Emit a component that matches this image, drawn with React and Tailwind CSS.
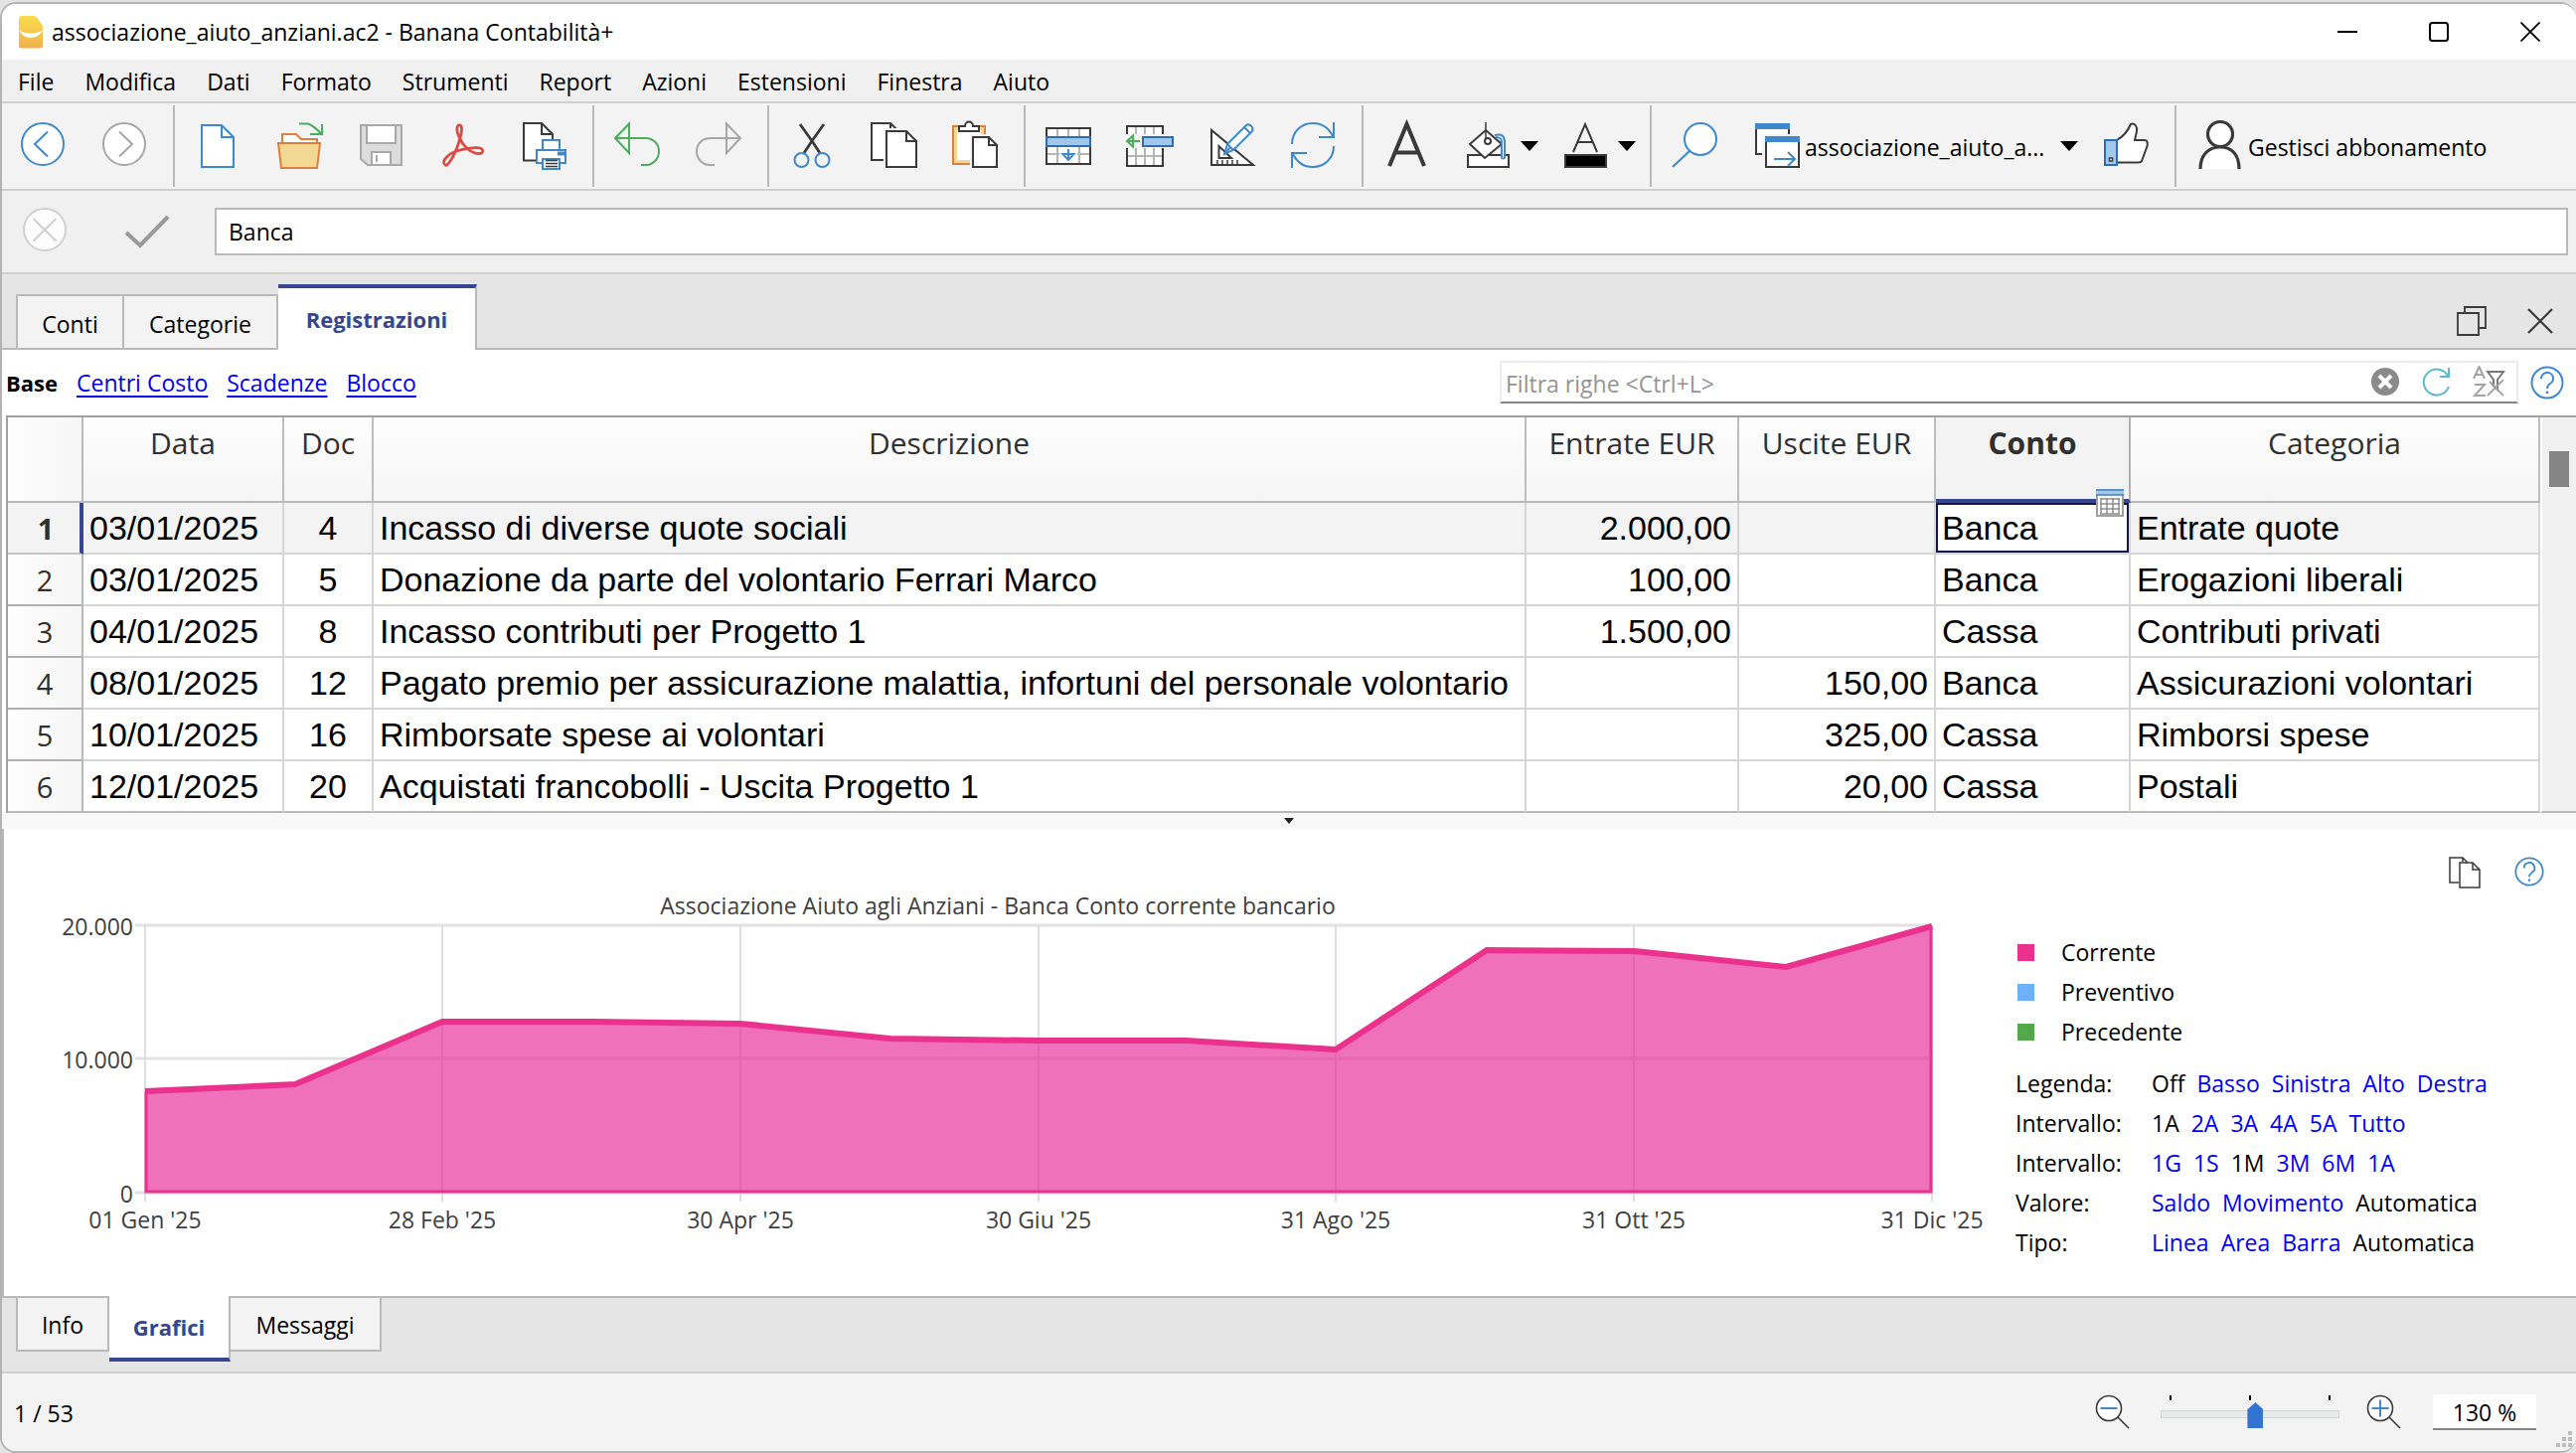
import React from "react";

const BLUE = "#3f88cb";
const DARK = "#3a3a3a";
const GREEN = "#4aac5c";
const GREY = "#a6a6a6";

function Icon({ stroke = DARK, children }) {
  return (
    <svg viewBox="0 0 48 48" className="h-12 w-12 shrink-0 overflow-visible" fill="none" stroke={stroke} strokeWidth="2" aria-hidden="true">
      {children}
    </svg>
  );
}

function ToolButton({ label, children }) {
  return (
    <button type="button" aria-label={label} className="flex w-[82px] shrink-0 items-center justify-center">
      {children}
    </button>
  );
}

function DropToolButton({ label, children }) {
  return (
    <button type="button" aria-label={label} className="flex w-[98px] shrink-0 items-center gap-[9px] pl-[17px]">
      {children}
      <Caret />
    </button>
  );
}

function Caret() {
  return (
    <svg viewBox="0 0 18 10" className="h-2.5 w-[18px] shrink-0" aria-hidden="true">
      <path d="M0 0H18L9 10Z" fill="#000" />
    </svg>
  );
}

function Separator() {
  return <div className="mr-0.5 ml-2 w-0.5 shrink-0 self-stretch bg-[#b9b9b9]" />;
}

function CopyIcon() {
  return (
    <Icon>
      <path d="M15.500 38H2V1H21L28 8V14" fill="#fff" />
      <path d="M21 1V8" />
      <path d="M17 9H37L47 19V45H17Z" fill="#fff" stroke="#f3f3f3" strokeWidth="6" />
      <path d="M17 9H37L47 19V45H17Z" fill="#fff" />
      <path d="M37 9V19H47" />
    </Icon>
  );
}

function HelpIcon({ className }) {
  return (
    <svg viewBox="0 0 34 34" className={className} fill="none" stroke={BLUE} strokeWidth="2" aria-hidden="true">
      <circle cx="17" cy="17" r="15.500" />
      <path d="M11 13a6 6 0 1 1 9 5c-2 1.300-3 2.500-3 5" />
      <path d="M17 25.500V28" strokeWidth="2.500" />
    </svg>
  );
}

function TitleBar() {
  return (
    <header className="flex h-14 items-center bg-white pl-4">
      <svg viewBox="0 0 26 34" className="h-[34px] w-[26px] shrink-0" aria-hidden="true">
        <defs>
          <linearGradient id="logo" x1="0" y1="0" x2="0" y2="1">
            <stop offset="0" stopColor="#f9dc4c" />
            <stop offset="1" stopColor="#f1b04e" />
          </linearGradient>
        </defs>
        <path d="M4 1H16Q18 1 19.500 3L25 11V31Q25 33.500 22 33.500H4Q1 33.500 1 31V4Q1 1 4 1Z" fill="url(#logo)" />
        <path d="M1 15Q6 18.500 13 18.500T25 15Q21 23 13 23T1 15Z" fill="#fff" />
      </svg>
      <h1 className="ml-2 flex-1">associazione_aiuto_anziani.ac2 - Banana Contabilità+</h1>
      <button type="button" aria-label="Riduci a icona" className="flex h-14 w-[92px] items-center justify-center">
        <svg viewBox="0 0 20 20" className="h-5 w-5"><path d="M0 10H20" stroke="#000" strokeWidth="2" /></svg>
      </button>
      <button type="button" aria-label="Ingrandisci" className="flex h-14 w-[92px] items-center justify-center">
        <svg viewBox="0 0 20 20" className="h-5 w-5"><rect x="1" y="1" width="18" height="18" rx="2.500" fill="none" stroke="#000" strokeWidth="2" /></svg>
      </button>
      <button type="button" aria-label="Chiudi" className="flex h-14 w-[92px] items-center justify-center">
        <svg viewBox="0 0 20 20" className="h-5 w-5"><path d="M0.500 0.500L19.500 19.500M19.500 0.500L0.500 19.500" stroke="#000" strokeWidth="1.800" /></svg>
      </button>
    </header>
  );
}

const MENUS = ["File", "Modifica", "Dati", "Formato", "Strumenti", "Report", "Azioni", "Estensioni", "Finestra", "Aiuto"];

function MenuBar() {
  return (
    <nav className="flex h-11 items-center border-b-2 border-[#cfcfcf] bg-[#f0f0f0] pt-0.5 pl-4">
      <div className="flex gap-[31px]">
        {MENUS.map((m) => (
          <button key={m} type="button">{m}</button>
        ))}
      </div>
    </nav>
  );
}

function Toolbar() {
  return (
    <div className="flex h-[88px] border-b-2 border-[#cfcfcf] bg-[#f3f3f3] py-0.5">
      <ToolButton label="Indietro">
        <Icon stroke={BLUE}><circle cx="24" cy="22" r="21" fill="#fff" /><path d="M29 9.500L16 22L29 34.500" /></Icon>
      </ToolButton>
      <ToolButton label="Avanti">
        <Icon stroke={GREY}><circle cx="24" cy="22" r="21" fill="#fff" /><path d="M19 9.500L32 22L19 34.500" /></Icon>
      </ToolButton>
      <Separator />
      <ToolButton label="Nuovo">
        <Icon stroke={BLUE}><path d="M8 3H28L40 15V45H8Z" fill="#fff" /><path d="M28 3V15H40" /></Icon>
      </ToolButton>
      <ToolButton label="Apri">
        <Icon stroke="#df7f3c">
          <path d="M7 21V12H21L26 17H42V21" fill="#fff" />
          <path d="M3 21H45L42 46H6Z" fill="#f2d993" />
          <path d="M24 1.500H33C38 3.500 43 8 46.500 12M47 2V12H35" stroke={GREEN} />
        </Icon>
      </ToolButton>
      <ToolButton label="Salva">
        <Icon stroke="#a8a8a8">
          <path d="M4 3H45V43H11L4 37Z" fill="#dcdcdc" />
          <path d="M10 3H39V21H10Z" fill="#fff" />
          <path d="M15 43V30H34V43Z" fill="#fff" />
          <path d="M20 33V40" />
        </Icon>
      </ToolButton>
      <ToolButton label="Esporta PDF">
        <Icon stroke="#dc4a44">
          <path strokeWidth="2.800" d="M7 43C2 39 11 31 20 28.500C30 26 43 24 44.500 28C46 33 37 33 29 26.500C22 20 17 8 19.500 4C21 1.500 24 3 23.500 8C22.500 17 17 33 11 40.500C9 43 8 44 7 43Z" />
        </Icon>
      </ToolButton>
      <ToolButton label="Stampa">
        <Icon>
          <path d="M17 38.500H4V1H22L33 12V20" fill="#fff" />
          <path d="M22 1V12H33" />
          <path d="M23 28V18H40V28" stroke={BLUE} fill="#fff" />
          <path d="M17 28H46V41H17Z" stroke={BLUE} fill="#fff" />
          <path d="M38 31.500H45" stroke={BLUE} strokeWidth="4" />
          <path d="M23 37H40V47H23Z" stroke={BLUE} fill="#fff" />
          <path d="M26 38.500H38M26 41.500H38M26 44.500H38" strokeWidth="1.500" />
        </Icon>
      </ToolButton>
      <Separator />
      <ToolButton label="Annulla">
        <Icon stroke={GREEN}><path d="M16 1.500L2 16L16 31Z" /><path d="M2 16H32C41 16 46 22 46 29.500S40 43 33 43H28" /></Icon>
      </ToolButton>
      <ToolButton label="Ripeti">
        <Icon stroke={GREY}><path d="M32 1.500L46 16L32 31Z" /><path d="M46 16H16C7 16 2 22 2 29.500S8 43 15 43H20" /></Icon>
      </ToolButton>
      <Separator />
      <ToolButton label="Taglia">
        <Icon>
          <path d="M12 2L24.500 19.500L32 31M36 2L23.500 19.500L16 31" strokeWidth="2.800" />
          <circle cx="13.500" cy="38" r="7" stroke={BLUE} /><circle cx="34.500" cy="38" r="7" stroke={BLUE} />
        </Icon>
      </ToolButton>
      <ToolButton label="Copia"><CopyIcon /></ToolButton>
      <ToolButton label="Incolla">
        <Icon>
          <path d="M2 4H34V42H2Z" fill="#f2d993" stroke="#df7f3c" />
          <path d="M6 8H30V38H6Z" fill="#fff" stroke="none" />
          <path d="M8 9V4H14C14 -2 22 -2 22 4H28V9Z" fill="#fff" />
          <path d="M22 15H38L46 23V45H22Z" fill="#fff" stroke="#f3f3f3" strokeWidth="6" />
          <path d="M22 15H38L46 23V45H22Z" fill="#fff" /><path d="M38 15V23H46" />
        </Icon>
      </ToolButton>
      <Separator />
      <ToolButton label="Aggiungi righe">
        <Icon>
          <path d="M2 6H46V42H2Z" fill="#fff" />
          <path d="M13 7V14M24 7V14M35 7V14M13 24V41M35 24V41M3 32H45" stroke="#b5b5b5" />
          <path d="M15 25H33V41H15Z" fill="#fff" stroke="none" />
          <path d="M2 15H46V24H2Z" fill="#a1c8ea" stroke="#2c6db5" />
          <path d="M24 27V38M18.500 32H29.500L24 38Z" stroke={BLUE} />
        </Icon>
      </ToolButton>
      <ToolButton label="Inserisci righe">
        <Icon>
          <path d="M1 4H37V44H1Z" fill="#fff" />
          <path d="M10 5V43M19 5V43M28 5V43M2 34H36" stroke="#b5b5b5" />
          <path d="M-1 12H40V26H-1Z" fill="#f3f3f3" stroke="none" />
          <path d="M17 15H47V24H17Z" fill="#a1c8ea" stroke="#2c6db5" />
          <path d="M1 19H14M7 13.500V24.500L1 19Z" stroke={GREEN} />
        </Icon>
      </ToolButton>
      <ToolButton label="Progettazione">
        <Icon>
          <path d="M4 8V43H46Z" fill="#fff" /><path d="M11.500 24V36H24Z" />
          <path d="M10 38V42M15 38V42M20 38V42M25 38V42M30 38V42" strokeWidth="1.500" />
          <path d="M17 32L20 22L39 3C42 1 47 5 45 9L26 28Z" fill="#fff" stroke={BLUE} />
          <path d="M20 22L26 28M37 5L43 11M17 32L23 25" stroke={BLUE} />
        </Icon>
      </ToolButton>
      <ToolButton label="Aggiorna">
        <Icon stroke={BLUE}>
          <path d="M3 22C3 10 12 1 24 1C33 1 40 6 44 14M45 0V15H30" />
          <path d="M45 24C45 36 36 45 24 45C15 45 8 40 4 32M3 46V31H18" />
        </Icon>
      </ToolButton>
      <Separator />
      <ToolButton label="Carattere">
        <Icon><path d="M7 44L24.500 2L42 44M13 30.500H36" strokeWidth="4" /></Icon>
      </ToolButton>
      <DropToolButton label="Colore sfondo">
        <Icon>
          <path d="M4 33H45V45H4Z" fill="#fff" />
          <path d="M22 8L38 22L21 36L6 22Z" fill="#fff" />
          <path d="M22 0V16" strokeWidth="1.500" /><circle cx="24" cy="19" r="3" />
          <path d="M31 13C38 11 41 14 41 20V35C41 37 38 37 38 35V20C38 16 36 15 32 15" stroke={BLUE} fill="#fff" />
        </Icon>
      </DropToolButton>
      <DropToolButton label="Colore testo">
        <Icon><path d="M12 30L24 2L36 30M16 20H32" strokeWidth="2" /><path d="M4 33H45V45H4Z" fill="#000" /></Icon>
      </DropToolButton>
      <Separator />
      <ToolButton label="Cerca">
        <Icon stroke={BLUE}><circle cx="30" cy="17" r="16" fill="#fff" /><path d="M19 29L2 45" /></Icon>
      </ToolButton>
      <button type="button" className="flex w-[352px] shrink-0 items-center pl-[18px]">
        <Icon>
          <path d="M10 32H3V2H36V13" fill="#fff" />
          <path d="M2 4H37" stroke={BLUE} strokeWidth="6" />
          <path d="M9 12H50V46H9Z" fill="#f3f3f3" stroke="none" />
          <path d="M13 16H46V45H13Z" fill="#fff" />
          <path d="M12 17H47" stroke={BLUE} strokeWidth="6" />
          <path d="M21 37H41M35 30L42 37L35 44" stroke={BLUE} />
        </Icon>
        <span className="ml-1 pt-0.5">associazione_aiuto_a...</span>
        <span className="mr-[7px] ml-auto"><Caret /></span>
      </button>
      <ToolButton label="Mi piace">
        <Icon>
          <path d="M15 18C22 14 26 9 29 2C33 0 36 5 35 9L33 18H43C46 18 46 21 45.500 24L40 39C39.500 40.500 38 40.500 36 40.500H15Z" fill="#fff" />
          <path d="M3 18H15V43H3Z" fill="#a1c8ea" stroke="#2c6db5" />
          <path d="M7.500 36H10.500V39H7.500Z" fill="#fff" strokeWidth="1.500" />
        </Icon>
      </ToolButton>
      <Separator />
      <button type="button" className="flex shrink-0 items-center pl-[18px]">
        <Icon><path d="M4 47C4 33 12 25 24 25S43 33 43 47" fill="#fff" strokeWidth="3.200" /><circle cx="24" cy="12" r="12.500" fill="#fff" strokeWidth="3.200" /></Icon>
        <span className="ml-1 pt-0.5">Gestisci abbonamento</span>
      </button>
    </div>
  );
}

function FormulaBar() {
  return (
    <div className="flex h-[84px] items-center border-b-2 border-[#cfcfcf] bg-[#f0f0f0] pr-2 pl-[19px]">
      <button type="button" aria-label="Annulla modifica">
        <Icon stroke="#d0d0d0"><circle cx="24" cy="22" r="21" fill="#fcfcfc" /><path d="M12.500 11L35.500 33.500M35.500 11L12.500 33.500" /></Icon>
      </button>
      <button type="button" aria-label="Conferma" className="ml-[54px]">
        <Icon stroke="#999"><path d="M4 25L18 38L46 9" strokeWidth="4" /></Icon>
      </button>
      <input aria-label="Contenuto cella" defaultValue="Banca" className="ml-[45px] h-12 min-w-0 flex-1 border-2 border-[#b9b9b9] bg-white px-3 outline-none" />
    </div>
  );
}

function TopTabs() {
  return (
    <div className="flex h-[76px] items-end bg-[#e5e5e5]">
      <div className="w-3.5 self-stretch border-b-2 border-[#b9b9b9]" />
      <button type="button" className="h-14 w-[109px] border-2 border-[#b9b9b9] bg-[#f3f3f3] pt-1">Conti</button>
      <button type="button" className="h-14 w-[155px] border-2 border-l-0 border-[#b9b9b9] bg-[#f3f3f3] pt-1">Categorie</button>
      <button type="button" className="h-[66px] w-[200px] border-t-4 border-r-2 border-t-[#37468f] border-r-[#b9b9b9] bg-white text-[22px] font-bold text-[#37468f]">Registrazioni</button>
      <div className="flex flex-1 items-center justify-end gap-10 self-stretch border-b-2 border-[#b9b9b9] pt-5 pr-[23px]">
        <button type="button" aria-label="Ripristina">
          <svg viewBox="0 0 32 32" className="h-8 w-8" fill="none" stroke={DARK} strokeWidth="1.800"><path d="M9 8V2H30V23H23" /><path d="M2 8H23V30H2Z" /></svg>
        </button>
        <button type="button" aria-label="Chiudi scheda">
          <svg viewBox="0 0 26 26" className="h-[26px] w-[26px]" stroke={DARK} strokeWidth="2.200"><path d="M1 1L25 25M25 1L1 25" /></svg>
        </button>
      </div>
    </div>
  );
}

function FilterRow() {
  return (
    <div className="flex h-[66px] items-center bg-white pr-3 pl-1">
      <strong className="text-[22px]">Base</strong>
      {["Centri Costo", "Scadenze", "Blocco"].map((t) => (
        <a key={t} href="#" className="ml-[19px] text-[#0000ee] underline decoration-2 underline-offset-4">{t}</a>
      ))}
      <div className="-mt-0.5 ml-auto flex h-[43px] w-[1025px] items-center border-2 border-[#ececec] border-b-[#868686] bg-white">
        <input aria-label="Filtra righe" placeholder="Filtra righe <Ctrl+L>" className="h-full min-w-0 flex-1 bg-transparent pt-1 pl-1 outline-none placeholder:text-[#949494]" />
        <button type="button" aria-label="Cancella filtro" className="mr-[23px]">
          <svg viewBox="0 0 28 28" className="h-7 w-7"><circle cx="14" cy="14" r="14" fill="#8a8a8a" /><path d="M8 8L20 20M20 8L8 20" stroke="#fff" strokeWidth="4" /></svg>
        </button>
        <button type="button" aria-label="Aggiorna filtro" className="mr-[23px]">
          <svg viewBox="0 0 28 28" className="h-7 w-7 overflow-visible" fill="none" stroke="#58b9cc" strokeWidth="2"><path d="M27 19A13 13 0 1 1 26 8M27 0V9H18" /></svg>
        </button>
        <button type="button" aria-label="Ordina e filtra" className="mr-2.5">
          <svg viewBox="0 0 34 32" className="h-8 w-[34px]" fill="none" stroke="#a3a3a3" strokeWidth="2">
            <path d="M1 13L6.500 1L12 13M3 9H10M2 19H12L2 30H13" />
            <path d="M15 6H31L25 14V24L21 20V14Z" stroke="#787878" /><path d="M15 30L31 14M17 16L31 30" strokeWidth="1.800" />
          </svg>
        </button>
      </div>
      <button type="button" aria-label="Guida" className="ml-3"><HelpIcon className="h-[34px] w-[34px]" /></button>
    </div>
  );
}

const HEADERS = ["Data", "Doc", "Descrizione", "Entrate EUR", "Uscite EUR", "Conto", "Categoria"];
const ROWS = [
  ["03/01/2025", "4", "Incasso di diverse quote sociali", "2.000,00", "", "Banca", "Entrate quote"],
  ["03/01/2025", "5", "Donazione da parte del volontario Ferrari Marco", "100,00", "", "Banca", "Erogazioni liberali"],
  ["04/01/2025", "8", "Incasso contributi per Progetto 1", "1.500,00", "", "Cassa", "Contributi privati"],
  ["08/01/2025", "12", "Pagato premio per assicurazione malattia, infortuni del personale volontario", "", "150,00", "Banca", "Assicurazioni volontari"],
  ["10/01/2025", "16", "Rimborsate spese ai volontari", "", "325,00", "Cassa", "Rimborsi spese"],
  ["12/01/2025", "20", "Acquistati francobolli - Uscita Progetto 1", "", "20,00", "Cassa", "Postali"],
];
const ALIGN = ["text-left", "text-center", "text-left", "text-right", "text-right", "text-left", "text-left"];

function Ledger() {
  return (
    <div className="ml-1 flex border-t-2 border-l-2 border-[#a0a0a0] bg-white">
      <table className="flex-1 table-fixed border-separate border-spacing-0">
        <colgroup>
          <col className="w-[76px]" />
          <col className="w-[202px]" />
          <col className="w-[90px]" />
          <col />
          <col className="w-[214px]" />
          <col className="w-[198px]" />
          <col className="w-[196px]" />
          <col className="w-[412px]" />
        </colgroup>
        <thead>
          <tr className="h-[86px] text-[30px] leading-10 text-[#303030]">
            <th aria-label="Riga" className="border-r-2 border-b-2 border-[#b9b9b9] bg-linear-to-r from-[#fdfdfd] to-[#f6f6f6]" />
            {HEADERS.map((h) =>
              h === "Conto" ? (
                <th key={h} className="border-r-2 border-b-4 border-r-[#b0b0b0] border-b-[#37468f] bg-[#f3f3f3] pt-1.5 align-top font-bold">{h}</th>
              ) : (
                <th key={h} className="border-r-2 border-b-2 border-r-[#bdbdbd] border-b-[#b9b9b9] bg-linear-to-b from-[#fdfdfd] to-[#f5f5f5] pt-1.5 align-top font-normal">{h}</th>
              )
            )}
          </tr>
        </thead>
        <tbody>
          {ROWS.map((r, i) => (
            <tr key={i} className={i === 0 ? "h-[52px] bg-[#f3f3f3]" : "h-[52px] bg-white"}>
              <th
                scope="row"
                className={
                  i === 0
                    ? "border-r-4 border-b-2 border-r-[#37468f] border-b-[#c4c4c4] p-0 pt-0.5 pl-1 text-[29px] leading-10 font-bold text-[#303030]"
                    : i === 5
                      ? "border-r-2 border-b-2 border-[#b9b9b9] bg-linear-to-r from-[#fdfdfd] to-[#f6f6f6] p-0 pt-0.5 text-[29px] leading-10 font-normal text-[#303030]"
                      : "border-r-2 border-b-2 border-r-[#b9b9b9] border-b-[#b0b0b0] bg-linear-to-r from-[#fdfdfd] to-[#f6f6f6] p-0 pt-0.5 text-[29px] leading-10 font-normal text-[#303030]"
                }
              >
                {i + 1}
              </th>
              {r.map((c, j) => (
                <td key={j} className={`border-r-2 border-b-2 border-r-[#d6d6d6] p-0 font-['Liberation_Sans',Arial,sans-serif] text-[34px] leading-10 whitespace-nowrap ${i === 5 ? "border-b-[#b9b9b9]" : "border-b-[#d6d6d6]"} ${ALIGN[j]}`}>
                  {i === 0 && j === 5 ? (
                    <div className="relative h-[50px] border-2 border-[#12164a] bg-white pt-[3px] pl-1">
                      {c}
                      <button type="button" aria-label="Elenco conti" className="absolute -top-4 right-[3px]">
                        <svg viewBox="0 0 28 28" className="h-7 w-7" fill="none">
                          <path d="M1 1H27V27H1Z" fill="#fff" stroke="#a0a0a0" strokeWidth="2" />
                          <path d="M0 0H28V6H0Z" fill="#a1c8ea" /><path d="M0 1H28M0 6H28" stroke="#3f7fbf" strokeWidth="1.500" />
                          <path d="M5 9V25M11 9V25M17 9V25M23 9V25M4 10H24M4 15H24M4 20H24M4 25H24" stroke="#8f8f8f" strokeWidth="1.500" />
                        </svg>
                      </button>
                    </div>
                  ) : (
                    <div className="px-1.5">{c}</div>
                  )}
                </td>
              ))}
            </tr>
          ))}
        </tbody>
      </table>
      <div className="flex w-9 shrink-0 justify-center border-b-2 border-l-2 border-b-[#b9b9b9] border-l-white bg-[#f0f0f0] pt-[34px]">
        <div className="h-9 w-5 bg-[#858585]" />
      </div>
    </div>
  );
}

const POINTS = "146,264 297,257 445,194 597,194 745,196 896,211 1045,213 1194,213 1344,222 1496,122 1645,123 1797,139 1944,98";
const X_LABELS = [[146, "01 Gen '25"], [445, "28 Feb '25"], [745, "30 Apr '25"], [1045, "30 Giu '25"], [1344, "31 Ago '25"], [1644, "31 Ott '25"], [1944, "31 Dic '25"]];
const Y_LABELS = [[97, "20.000"], [231, "10.000"], [366, "0"]];

function Chart() {
  return (
    <svg viewBox="4 0 2024 420" className="block h-auto min-w-0 flex-1" role="img" aria-label="Andamento conto bancario">
      <text x="1004" y="86" textAnchor="middle" fontSize="23" fill="#404040">Associazione Aiuto agli Anziani - Banca Conto corrente bancario</text>
      {Y_LABELS.map(([y, t]) => (
        <g key={t}>
          <path d={`M136 ${y}H1944`} stroke="#e2e2e2" strokeWidth="3" />
          <text x="134" y={y + 10} textAnchor="end" fontSize="23" fill="#404040">{t}</text>
        </g>
      ))}
      {X_LABELS.map(([x, t]) => (
        <g key={t}>
          <path d={`M${x} 97V375`} stroke="#dedede" strokeWidth="2" />
          <text x={x} y="402" textAnchor="middle" fontSize="23" fill="#404040">{t}</text>
        </g>
      ))}
      <polygon points={`146,365 ${POINTS} 1944,365`} fill="#e62894" fillOpacity="0.66" />
      <path d="M147 264V365H1943V98" fill="none" stroke="#ea318d" strokeWidth="3" />
      <polyline points={POINTS} fill="none" stroke="#ea318d" strokeWidth="6" />
    </svg>
  );
}

const OPTIONS = [
  ["Legenda:", ["Off", "Basso", "Sinistra", "Alto", "Destra"], "Off"],
  ["Intervallo:", ["1A", "2A", "3A", "4A", "5A", "Tutto"], "1A"],
  ["Intervallo:", ["1G", "1S", "1M", "3M", "6M", "1A"], "1M"],
  ["Valore:", ["Saldo", "Movimento", "Automatica"], "Automatica"],
  ["Tipo:", ["Linea", "Area", "Barra", "Automatica"], "Automatica"],
];

function ChartPanel() {
  return (
    <section className="flex flex-1 items-start border-l-2 border-[#b9b9b9] bg-white">
      <Chart />
      <div className="w-[564px] shrink-0">
        <div className="flex h-[104px] items-start justify-end gap-[34px] pt-7 pr-8">
          <button type="button" aria-label="Copia grafico">
            <svg viewBox="0 0 32 32" className="h-8 w-8" fill="none" stroke={DARK} strokeWidth="1.500">
              <path d="M10 26H1V1H14L18 5V7M14 1V5" /><path d="M11 6H24L31 13V31H11ZM24 6V13H31" />
            </svg>
          </button>
          <button type="button" aria-label="Guida grafico"><HelpIcon className="h-[30px] w-[30px]" /></button>
        </div>
        <ul className="leading-10">
          <li className="flex items-center gap-[27px] pl-0.5"><span className="h-[17px] w-[17px] bg-[#ea318d]" />Corrente</li>
          <li className="flex items-center gap-[27px] pl-0.5"><span className="h-[17px] w-[17px] bg-[#6eb0fa]" />Preventivo</li>
          <li className="flex items-center gap-[27px] pl-0.5"><span className="h-[17px] w-[17px] bg-[#52a84a]" />Precedente</li>
        </ul>
        <div className="mt-3 leading-10">
          {OPTIONS.map(([label, values, current], i) => (
            <div key={i} className="flex">
              <span className="w-[137px]">{label}</span>
              <div className="flex gap-3">
                {values.map((v) => v === current ? <span key={v}>{v}</span> : <a key={v} href="#" className="text-[#0000ee]">{v}</a>)}
              </div>
            </div>
          ))}
        </div>
      </div>
    </section>
  );
}

function BottomTabs() {
  return (
    <div className="flex h-[78px] items-start border-b-2 border-[#cfcfcf] bg-[#e5e5e5]">
      <div className="w-3.5 border-t-2 border-[#b9b9b9]" />
      <button type="button" className="h-14 w-[94px] border-2 border-[#b9b9b9] bg-[#f3f3f3] pt-0.5">Info</button>
      <button type="button" className="h-[66px] w-[122px] border-r-2 border-b-4 border-r-[#b9b9b9] border-b-[#37468f] bg-white text-[22px] font-bold text-[#37468f]">Grafici</button>
      <button type="button" className="h-14 w-[152px] border-2 border-l-0 border-[#b9b9b9] bg-[#f3f3f3] pt-0.5">Messaggi</button>
      <div className="flex-1 border-t-2 border-[#b9b9b9]" />
    </div>
  );
}

function Magnifier({ plus }) {
  return (
    <svg viewBox="0 0 36 36" className="h-9 w-9" fill="none" stroke={DARK} strokeWidth="1.600">
      <circle cx="14" cy="14" r="12.500" fill="#fff" /><path d="M23 23L34 34" />
      <path d={plus ? "M5.500 14H22.500M14 5.500V22.500" : "M5.500 14H22.500"} stroke={BLUE} strokeWidth="2" />
    </svg>
  );
}

function StatusBar() {
  return (
    <footer className="flex h-[78px] bg-[#f3f3f3] pl-3">
      <span className="flex flex-1 items-center pt-0.5">1 / 53</span>
      <button type="button" aria-label="Riduci zoom"><Magnifier /></button>
      <div className="mr-[27px] ml-[30px] flex w-[180px] flex-col pt-[22px]">
        <div className="flex justify-between px-[9px]">
          <span className="h-[5px] w-0.5 bg-black" /><span className="h-[5px] w-0.5 bg-black" /><span className="h-[5px] w-0.5 bg-black" />
        </div>
        <input
          type="range"
          aria-label="Zoom"
          min="10"
          max="235"
          defaultValue="130"
          className="mt-px h-[26px] w-full appearance-none bg-transparent [&::-webkit-slider-runnable-track]:h-2 [&::-webkit-slider-runnable-track]:border [&::-webkit-slider-runnable-track]:border-[#d3d6d6] [&::-webkit-slider-runnable-track]:bg-[#e6eaea] [&::-webkit-slider-thumb]:-mt-[9px] [&::-webkit-slider-thumb]:h-[26px] [&::-webkit-slider-thumb]:w-4 [&::-webkit-slider-thumb]:appearance-none [&::-webkit-slider-thumb]:bg-[#3274d0] [&::-webkit-slider-thumb]:[clip-path:polygon(50%_0,100%_28%,100%_100%,0_100%,0_28%)]"
        />
      </div>
      <button type="button" aria-label="Aumenta zoom"><Magnifier plus /></button>
      <input aria-label="Percentuale zoom" defaultValue="130 %" className="ml-[31px] h-9 w-[104px] self-center border-b-2 border-[#868686] bg-white pt-0.5 text-center outline-none" />
      <svg viewBox="0 0 16 16" className="mr-1 mb-1 ml-5 h-4 w-4 self-end" fill="#bcbcbc">
        <path d="M12 0h4v4h-4zM6 6h4v4h-4zM12 6h4v4h-4zM0 12h4v4h-4zM6 12h4v4h-4zM12 12h4v4h-4z" />
      </svg>
    </footer>
  );
}

export default function App() {
  return (
    <div className="flex min-h-screen flex-col bg-[#e4e4e4] pt-0.5 font-['Open_Sans',sans-serif] text-[23px] leading-8 text-black">
      <div className="flex flex-1 flex-col overflow-hidden rounded-2xl border-y-2 border-l-2 border-[#b3b3b3] bg-white">
        <TitleBar />
        <MenuBar />
        <Toolbar />
        <FormulaBar />
        <TopTabs />
        <FilterRow />
        <Ledger />
        <div className="flex h-4 items-center justify-center bg-[#f8f8f8]">
          <svg viewBox="0 0 10 6" className="h-1.5 w-2.5"><path d="M0 0H10L5 6Z" fill="#222" /></svg>
        </div>
        <ChartPanel />
        <BottomTabs />
        <StatusBar />
      </div>
    </div>
  );
}
